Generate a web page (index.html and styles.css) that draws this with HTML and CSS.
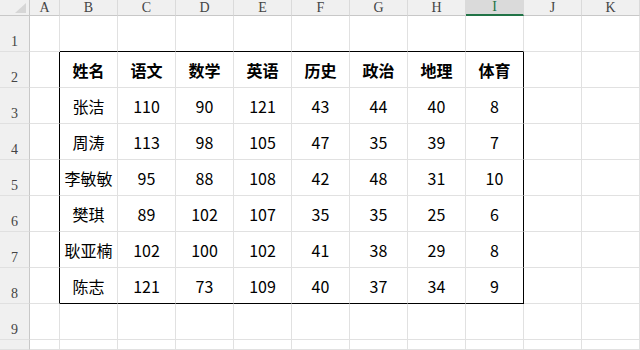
FILE: index.html
```html
<!DOCTYPE html>
<html lang="zh-CN">
<head>
<meta charset="utf-8">
<link rel="stylesheet" href="styles.css">
</head>
<body>
<div class="sheet" id="sheet"></div>
<script src="app.js"></script>
</body>
</html>
```

FILE: styles.css
```css
html, body { margin: 0; padding: 0; background: #fff; }
body { width: 640px; height: 350px; overflow: hidden; }
.sheet {
  display: grid;
  grid-template-columns: 30px 30px repeat(10, 58px);
  grid-template-rows: 16px repeat(9, 36px) 10px;
  width: 640px;
}
.cell {
  box-sizing: border-box;
  border-right: 1px solid #e1e1e1;
  border-bottom: 1px solid #e1e1e1;
  display: flex;
  align-items: center;
  justify-content: center;
  font-family: "Noto Sans CJK SC", "Noto Sans", sans-serif;
  font-size: 16px;
  color: #000;
  white-space: nowrap;
}
.head { font-weight: bold; }
.corner {
  background: #f0f0f0;
  border-right: 1px solid #c8c8c8;
  border-bottom: 1px solid #c8c8c8;
  position: relative;
}
.tri {
  position: absolute;
  right: 3px;
  bottom: 2px;
  width: 11px;
  height: 10px;
  background: #d6d6d6;
  clip-path: polygon(100% 0, 100% 100%, 0 100%);
}
.colh {
  background: #f0f0f0;
  border-right: 1px solid #dadada;
  border-bottom: 1px solid #c8c8c8;
  font-family: "Liberation Serif", "DejaVu Serif", serif;
  font-size: 14px;
  line-height: 14px;
  color: #444;
  align-items: center;
}
.colh.sel {
  background: #dadada;
  color: #217346;
  border-bottom: 2px solid #217346;
}
.rowh {
  background: #f0f0f0;
  border-right: 1px solid #c8c8c8;
  border-bottom: 1px solid #e0e0e0;
  font-family: "Liberation Serif", "DejaVu Serif", serif;
  font-size: 14px;
  line-height: 14px;
  color: #444;
  align-items: flex-end;
  padding-bottom: 2px;
}
.bkr { border-right-color: #000; }
.bkb { border-bottom-color: #000; }
```

FILE: app.js
```js
(function () {
  var data = [
    ["姓名", "语文", "数学", "英语", "历史", "政治", "地理", "体育"],
    ["张洁", "110", "90", "121", "43", "44", "40", "8"],
    ["周涛", "113", "98", "105", "47", "35", "39", "7"],
    ["李敏敏", "95", "88", "108", "42", "48", "31", "10"],
    ["樊琪", "89", "102", "107", "35", "35", "25", "6"],
    ["耿亚楠", "102", "100", "102", "41", "38", "29", "8"],
    ["陈志", "121", "73", "109", "40", "37", "34", "9"]
  ];
  var cols = ["A", "B", "C", "D", "E", "F", "G", "H", "I", "J", "K"];
  var sheet = document.getElementById("sheet");
  function cell(cls, text) {
    var d = document.createElement("div");
    d.className = "cell " + cls;
    if (text !== undefined) d.textContent = text;
    sheet.appendChild(d);
    return d;
  }
  var c = cell("corner");
  var t = document.createElement("div");
  t.className = "tri";
  c.appendChild(t);
  cols.forEach(function (l) { cell("colh" + (l === "I" ? " sel" : ""), l); });
  for (var r = 1; r <= 10; r++) {
    cell("rowh", r <= 9 ? String(r) : "");
    for (var ci = 0; ci < cols.length; ci++) {
      var cls = "";
      var txt = "";
      var inTable = r >= 2 && r <= 8;
      if (ci === 0 && inTable) cls += " bkr";
      if (ci === 8 && inTable) cls += " bkr";
      if (r === 1 && ci >= 1 && ci <= 8) cls += " bkb";
      if (r === 8 && ci >= 1 && ci <= 8) cls += " bkb";
      if (inTable && ci >= 1 && ci <= 8) {
        txt = data[r - 2][ci - 1];
        if (r === 2) cls += " head";
      }
      cell(cls, txt);
    }
  }
})();
```
